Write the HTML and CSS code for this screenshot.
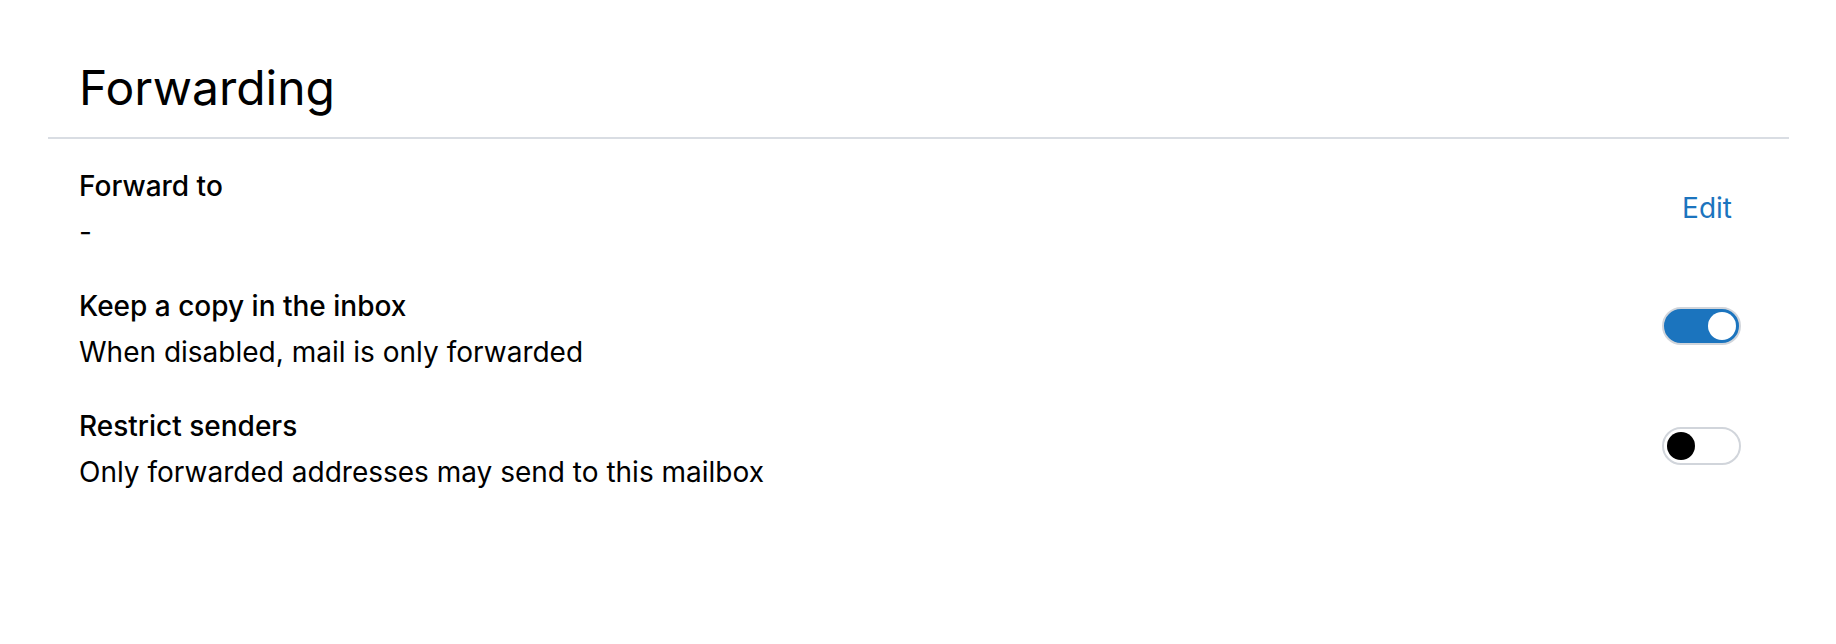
FILE: index.html
```html
<!DOCTYPE html>
<html>
<head>
    <title>Forwarding</title>
    <link rel="stylesheet" href="styles.css">
</head>
<body>
    <div class="page">
        <h1 class="title">Forwarding</h1>
        <div class="settings">
            <div class="row">
                <div class="info">
                    <div class="label">Forward to</div>
                    <div class="desc">-</div>
                </div>
                <button class="edit">Edit</button>
            </div>
            <div class="row">
                <div class="info">
                    <div class="label">Keep a copy in the inbox</div>
                    <div class="desc">When disabled, mail is only forwarded</div>
                </div>
                <span class="toggle on"><span class="knob"></span></span>
            </div>
            <div class="row">
                <div class="info">
                    <div class="label">Restrict senders</div>
                    <div class="desc">Only forwarded addresses may send to this mailbox</div>
                </div>
                <span class="toggle"><span class="knob"></span></span>
            </div>
        </div>
    </div>
</body>
</html>
```

FILE: styles.css
```css
body {
    margin: 0;
    padding: 0;
    background: #fff;
    color: #000;
    font-family: Inter, "Noto Sans", sans-serif;
}

.page {
    padding: 0 47px 0 48px;
}

.title {
    margin: 0;
    padding: 59px 31px 21px;
    font-size: 48px;
    font-weight: 400;
    line-height: 57px;
    border-bottom: 2px solid #d9dde3;
}

.settings {
    padding: 24px 48px 0 31px;
    display: flex;
    flex-direction: column;
    gap: 28px;
}

.row {
    display: flex;
    align-items: center;
    justify-content: space-between;
}

.label {
    font-size: 28px;
    font-weight: 500;
    line-height: 46px;
}

.desc {
    font-size: 28px;
    line-height: 46px;
}

.edit {
    background: none;
    border: none;
    padding: 0 9px 0 0;
    margin-bottom: 2px;
    font-family: inherit;
    font-size: 28px;
    color: #1b74be;
    cursor: pointer;
}

.toggle {
    box-sizing: border-box;
    width: 79px;
    height: 38px;
    margin-bottom: 7px;
    border: 2px solid #d1d5db;
    border-radius: 19px;
    background: #fff;
    display: flex;
    align-items: center;
    padding: 0 3px;
}

.toggle .knob {
    width: 28px;
    height: 28px;
    border-radius: 50%;
    background: #000;
}

.toggle.on {
    background: #1b74be;
    justify-content: flex-end;
}

.toggle.on .knob {
    background: #fff;
}
```
